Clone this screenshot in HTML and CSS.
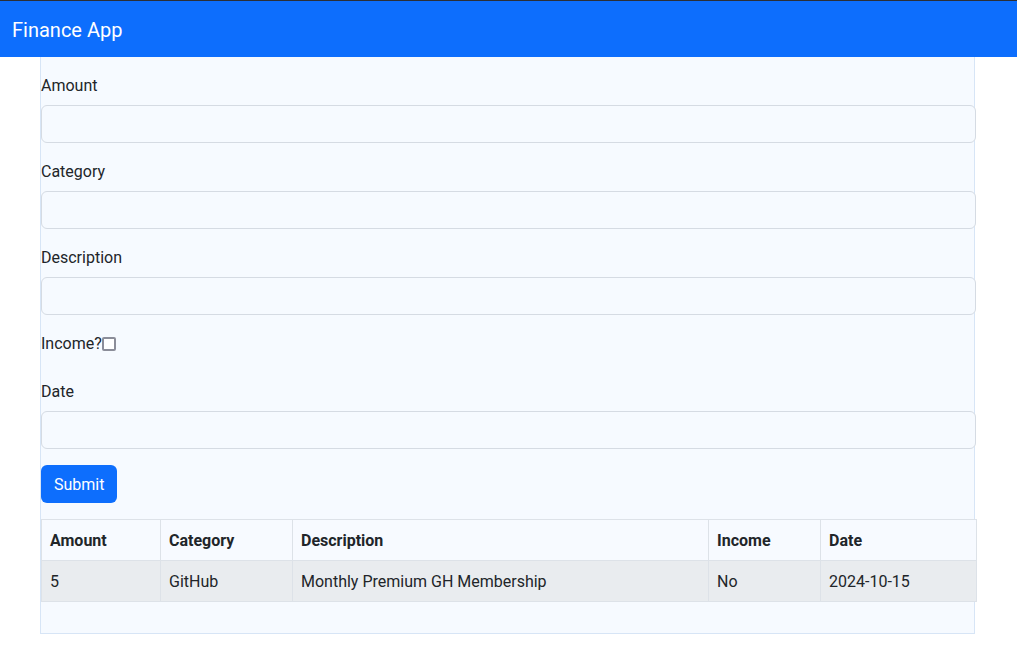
FILE: index.html
```html
<!DOCTYPE html>
<html lang="en">
<head>
<meta charset="utf-8">
<title>Finance App</title>
<link rel="stylesheet" href="styles.css">
</head>
<body>
<div class="topline"></div>
<nav class="navbar">
  <span class="brand">Finance App</span>
</nav>
<main class="container">
  <form class="form">
    <div class="group">
      <label class="label" for="amount">Amount</label>
      <input class="input" id="amount" type="text">
    </div>
    <div class="group">
      <label class="label" for="category">Category</label>
      <input class="input" id="category" type="text">
    </div>
    <div class="group">
      <label class="label" for="description">Description</label>
      <input class="input" id="description" type="text">
    </div>
    <div class="group">
      <label class="label check-label">Income?<input class="check" type="checkbox"></label>
    </div>
    <div class="group">
      <label class="label" for="date">Date</label>
      <input class="input" id="date" type="text">
    </div>
    <button class="btn" type="button">Submit</button>
  </form>
  <table class="table">
    <colgroup>
      <col class="c1"><col class="c2"><col class="c3"><col class="c4"><col class="c5">
    </colgroup>
    <thead>
      <tr><th>Amount</th><th>Category</th><th>Description</th><th>Income</th><th>Date</th></tr>
    </thead>
    <tbody>
      <tr><td>5</td><td>GitHub</td><td>Monthly Premium GH Membership</td><td>No</td><td>2024-10-15</td></tr>
    </tbody>
  </table>
</main>
</body>
</html>
```
FILE: styles.css
```css
* { box-sizing: border-box; }
html, body { margin: 0; padding: 0; }
body {
  font-family: Roboto, "Liberation Sans", sans-serif;
  font-size: 16px;
  line-height: 24px;
  color: #212529;
  background: #ffffff;
}
.topline { height: 1px; background: #2b2f36; }
.navbar {
  background: #0d6efd;
  height: 56px;
  padding: 2px 12px 0 12px;
  display: flex;
  align-items: center;
}
.brand {
  color: #ffffff;
  font-size: 20px;
  line-height: 30px;
}
.container {
  width: 935px;
  margin-left: 40px;
  background: #f6faff;
  border: 1px solid #d7e5f6;
  border-top: none;
  padding: 16px 0 15px 0;
}
.form { display: flex; flex-direction: column; align-items: flex-start; }
.group { width: calc(100% + 2px); margin-bottom: 16px; }
.label { display: block; padding-top: 1px; height: 24px; margin-bottom: 8px; }
.check-label { display: flex; align-items: center; }
.check {
  -webkit-appearance: none;
  appearance: none;
  width: 14px;
  height: 14px;
  margin: 1px 0 0 0;
  border: 2px solid #8b8d99;
  border-radius: 2px;
  background: #fff;
}
.input {
  display: block;
  width: 100%;
  height: 38px;
  border: 1px solid #d5dbe3;
  border-radius: 6px;
  background: #f6faff;
  padding: 6px 12px;
  font: inherit;
}
.btn {
  background: #0d6efd;
  color: #fff;
  border: none;
  border-radius: 6px;
  height: 38px;
  padding: 1px 13px 0 13px;
  font: inherit;
  margin-bottom: 16px;
}
.table {
  width: calc(100% + 2px);
  border-collapse: collapse;
  table-layout: fixed;
  margin-bottom: 16px;
}
.c1 { width: 119px; }
.c2 { width: 132px; }
.c3 { width: 416px; }
.c4 { width: 112px; }
.c5 { width: 156px; }
.table th, .table td {
  border: 1px solid #dde2e8;
  padding: 9px 8px 7px 8px;
  text-align: left;
  height: 41px;
}
.table th { font-weight: 700; background: #f7faff; }
.table td { background: #e9ecef; }
```
